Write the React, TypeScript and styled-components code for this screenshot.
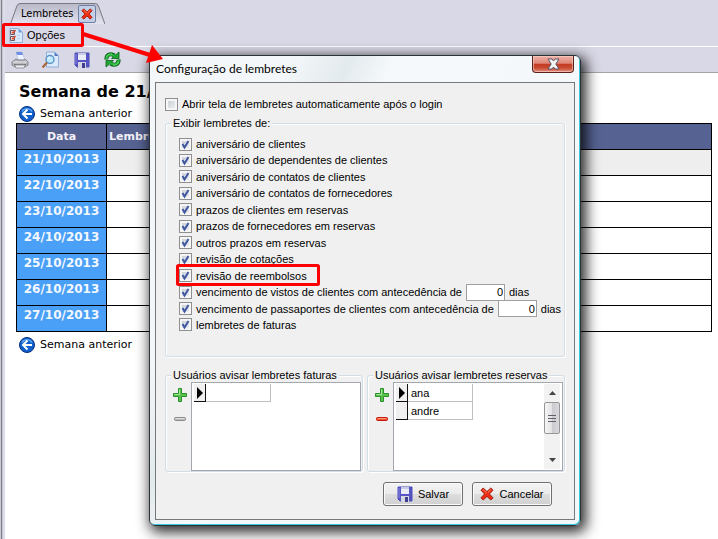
import React from "react";
import styled, { createGlobalStyle } from "styled-components";

const GlobalStyle = createGlobalStyle`
  * { box-sizing: border-box; }
  html, body, #root { margin: 0; height: 100%; }
  body { background: #fff; color: #000; overflow: hidden; font: 11px/16px "Liberation Sans", Arial, sans-serif; }
  button, input { font: inherit; color: inherit; }
`;

const Window = styled.div`
  position: relative;
  display: flex;
  height: 100%;
  overflow: hidden;
`;

const Rail = styled.div`
  flex: 0 0 5px;
  background: linear-gradient(90deg, #c9c8dc 0 1px, #828282 1px 2px, #c6c6cf 2px 3px, #dcdcec 3px 5px);
`;

const Main = styled.main`
  flex: 1;
  min-width: 0;
`;

const Chrome = styled.header`
  background: #d9d8e6;
`;

const TabBar = styled.nav`
  display: flex;
  height: 24px;
  padding: 3px 0 0 5px;
`;

const Tab = styled.div`
  position: relative;
  display: flex;
  align-items: center;
  gap: 5px;
  padding: 0 9px 0 11px;
  font: 11px/16px "DejaVu Sans Condensed", Tahoma, sans-serif;
`;

const TabShape = styled.svg`
  position: absolute;
  inset: 0;
  width: 100%;
  height: 100%;
`;

const TabLabel = styled.span`
  position: relative;
`;

const TabClose = styled.button`
  position: relative;
  display: grid;
  place-items: center;
  width: 18px;
  height: 18px;
  padding: 0;
  border: 1px solid #6d7fa5;
  border-radius: 2px;
  background: #c3cfe6;
`;

const MenuBar = styled.div`
  display: flex;
  height: 23px;
  padding: 0 4px;
  border-bottom: 1px solid #fff;
`;

const MenuItem = styled.button`
  display: flex;
  align-items: center;
  gap: 4px;
  padding: 0;
  border: 0;
  background: none;
`;

const Toolbar = styled.div`
  display: flex;
  align-items: center;
  gap: 12px;
  height: 26px;
  padding: 0 5px;
  border-bottom: 1px solid #a5a5a5;
`;

const ToolButton = styled.button`
  display: grid;
  place-items: center;
  width: 19px;
  height: 20px;
  padding: 0;
  border: 0;
  background: none;
`;

const Report = styled.section`
  padding: 6px 6px 0 11px;
  font-family: "DejaVu Sans", Verdana, sans-serif;
`;

const Heading = styled.h1`
  margin: 0 0 0 3px;
  font-size: 16px;
  line-height: 25px;
`;

const WeekLink = styled.a`
  display: flex;
  align-items: center;
  gap: 5px;
  height: 19px;
  margin: 0 3px;
  color: #000;
  text-decoration: none;
`;

const Table = styled.table`
  width: 100%;
  margin-bottom: 3px;
  border-collapse: collapse;
  font-weight: bold;
`;

const Th = styled.th<{ $left?: boolean }>`
  height: 26px;
  padding: 0 2px;
  border: 1px solid #000;
  background: #566291;
  color: #f2f2f8;
  text-align: ${(p) => (p.$left ? "left" : "center")};
`;

const DateCell = styled.th`
  width: 90px;
  height: 26px;
  padding: 1px 0 0;
  border: 1px solid #000;
  background: #4aa0f7;
  color: #f4f8ff;
  font-size: 12px;
  vertical-align: top;
`;

const EntryCell = styled.td<{ $today?: boolean }>`
  border: 1px solid #000;
  background: ${(p) => (p.$today ? "#eee" : "#fff")};
`;

const Dialog = styled.section`
  position: absolute;
  left: 149px;
  top: 55px;
  width: 432px;
  padding: 0 5px 5px;
  border: 1px solid #2b3337;
  border-radius: 6px;
  background: linear-gradient(115deg, #f3f7f9 0 22%, #e3eaed 31%, #f5f9fb 38%, #f2f7f9);
  box-shadow: inset -1px -1px 0 #3cc8dc, 3px 4px 14px 2px rgba(0, 0, 0, 0.85);
`;

const TitleBar = styled.header`
  display: flex;
  justify-content: space-between;
  height: 26px;
  padding: 0 1px;
`;

const Title = styled.h2`
  margin: 0;
  font: 12px/26px Lato, "Segoe UI", sans-serif;
`;

const CloseButton = styled.button`
  display: grid;
  place-items: center;
  width: 42px;
  height: 17px;
  padding: 0;
  border: 1px solid #5a211c;
  border-top: 0;
  border-radius: 0 0 4px 4px;
  background: linear-gradient(#efb0a5, #dc8577 46%, #c43a22 50%, #c84b33 75%, #e39482);
  box-shadow: inset 0 0 0 1px rgba(255, 215, 205, 0.55);
`;

const Client = styled.div`
  padding: 13px 9px;
  border: 1px solid #75797b;
  background: #f0f0f0;
`;

const Field = styled.label`
  display: flex;
  align-items: center;
  gap: 4px;
  height: 16px;
  white-space: nowrap;
`;

const CheckFrame = styled.span`
  display: grid;
  flex: none;
  place-items: center;
  width: 13px;
  height: 13px;
  > * { grid-area: 1 / 1; }
`;

const CheckInput = styled.input`
  appearance: none;
  width: 13px;
  height: 13px;
  margin: 0;
  border: 1px solid #8e8f8f;
  background: linear-gradient(135deg, #c4c9d2, #f3f4f6);
  box-shadow: inset 0 0 0 2px #f6f6f6;
  + svg { visibility: hidden; pointer-events: none; }
  &:checked + svg { visibility: visible; }
`;

const Group = styled.fieldset`
  min-width: 0;
  margin: 0;
  padding: 0 1px 0 8px;
  border: 1px solid #d3dde5;
  border-radius: 3px;
  box-shadow: 1px 1px 0 #fff, inset 1px 1px 0 #fff;
`;

const Legend = styled.legend`
  margin-left: -3px;
  padding: 0 2px;
  line-height: 14px;
  white-space: nowrap;
  background: #f0f0f0;
`;

const Options = styled.div`
  display: grid;
  align-content: space-between;
  min-height: 197px;
  margin: 6px 5px 23px;
`;

const OptionRow = styled.div`
  display: flex;
  align-items: center;
  gap: 4px;
  height: 16px;
`;

const DaysInput = styled.input`
  width: 39px;
  height: 17px;
  padding: 0 1px;
  border: 1px solid #a0a0a0;
  border-radius: 0;
  background: #fff;
  text-align: right;
`;

const DialogBody = styled.div`
  display: grid;
  gap: 4px;
`;

const UserGroups = styled.div`
  display: grid;
  grid-template-columns: 1fr 1fr;
  gap: 4px;
  margin-top: 7px;
`;

const UserPanel = styled.div`
  display: flex;
  gap: 4px;
`;

const ListActions = styled.div`
  display: flex;
  flex-direction: column;
  gap: 8px;
  padding-top: 5px;
`;

const ListAction = styled.button`
  display: grid;
  place-items: center;
  width: 14px;
  height: 16px;
  margin-left: -1px;
  padding: 0;
  border: 0;
  background: none;
`;

const ListBox = styled.div`
  display: flex;
  flex: 1;
  justify-content: space-between;
  height: 89px;
  padding: 1px 2px;
  border: 1px solid #a3a7ae;
  background: #fff;
`;

const UserTable = styled.table`
  align-self: flex-start;
  border-spacing: 0;
`;

const Marker = styled.td`
  width: 12px;
  height: 18px;
  padding: 0;
  border: solid #111;
  border-width: 0 1px 1px 0;
  background: #f0f0f0;
  line-height: 0;
`;

const UserCell = styled.td`
  width: 65px;
  padding: 0 3px;
  border: solid #c0c0c0;
  border-width: 0 1px 1px 0;
`;

const ScrollTrack = styled.div`
  display: flex;
  flex-direction: column;
  width: 16px;
  background: #f2f2f2;
`;

const ScrollArrow = styled.button`
  display: grid;
  flex: 0 0 18px;
  place-items: center;
  padding: 0;
  border: 0;
  background: none;
`;

const ScrollThumb = styled.div`
  display: grid;
  flex: 0 0 32px;
  place-items: center;
  margin-bottom: auto;
  border: 1px solid #979797;
  border-radius: 2px;
  background: linear-gradient(90deg, #f5f5f5, #e3e3e5 48%, #cbcbd0 52%, #d8d8dc);
`;

const Footer = styled.footer`
  display: flex;
  justify-content: flex-end;
  gap: 9px;
  margin-top: 6px;
  padding-right: 13px;
`;

const PushButton = styled.button`
  display: flex;
  align-items: center;
  justify-content: center;
  gap: 5px;
  min-width: 80px;
  height: 24px;
  padding: 0 6px;
  border: 1px solid #707070;
  border-radius: 3px;
  background: linear-gradient(#f3f3f3, #ebebeb 49%, #dddddd 51%, #d0d0d0);
  box-shadow: inset 0 0 0 1px #fafafa;
`;

const Annotations = styled.svg`
  position: absolute;
  left: 0;
  top: 0;
  pointer-events: none;
`;

const CrossIcon = ({ size = 14 }: { size?: number }) => (
  <svg width={size} height={size} viewBox="0 0 14 14" aria-hidden="true">
    <path d="M3.2 1 7 4.6 10.8 1 13 3.2 9.4 7 13 10.8 10.8 13 7 9.4 3.2 13 1 10.8 4.6 7 1 3.2Z" fill="#ee2c14" stroke="#a51c0c" />
    <path d="M3 2.5 6.8 6M11 2.5 8 5.4" stroke="#ff8a68" />
  </svg>
);

const FloppyIcon = () => (
  <svg width="16" height="16" viewBox="0 0 16 16" aria-hidden="true">
    <path d="M1 1h14v14H3l-2-2Z" fill="#5654c4" stroke="#4f4cb4" />
    <path d="M2 2v10" stroke="#8a88e6" />
    <path d="M4 1h8v7H4Z" fill="#e9ebf6" />
    <path d="M4 1h8v2H4Z" fill="#c8cbe4" />
    <path d="M4 10h8v6H4Z" fill="#d4d6e0" />
    <path d="M8 11h3v5H8Z" fill="#413e92" />
  </svg>
);

const PrinterIcon = () => (
  <svg width="18" height="18" viewBox="0 0 18 18" aria-hidden="true">
    <path d="M5 1h6l3 8H7Z" fill="#eef3ff" stroke="#c3cbe2" />
    <path d="M5 1h6l1 3H6Z" fill="#6f8fe0" />
    <path d="m1 11 4-3 2 1h6l1-1 3 3v3l-3 2H4l-3-2Z" fill="#b9b9be" stroke="#85858c" />
    <path d="M2 11h14" stroke="#e6e6ea" />
    <path d="M3 13.5h12" stroke="#6a6a72" />
    <path d="m4 14 1 3h8l1-3Z" fill="#ececf0" stroke="#9a9aa2" />
  </svg>
);

const PreviewIcon = () => (
  <svg width="19" height="18" viewBox="0 0 19 18" aria-hidden="true">
    <path d="M5.5 1h8l4 4v11h-12Z" fill="#dceafb" stroke="#8fb0da" />
    <path d="M13.500 1v4h4Z" fill="#4f7cc0" />
    <circle cx="9" cy="8.500" r="4" fill="#bfeaff" stroke="#5a92c4" strokeWidth="1.400" />
    <path d="M7 8a2 2 0 0 1 2-2" stroke="#fff" fill="none" />
    <path d="m6 11.500-4.500 5" stroke="#a8683e" strokeWidth="2.200" />
  </svg>
);

const RefreshArrow = () => (
  <>
    <path d="M2.500 8.500C2 4 6 1.500 10.500 4.500" fill="none" stroke="#07631a" strokeWidth="4" />
    <path d="M7.500 7.500h7.500V1Z" fill="#1fa831" stroke="#07631a" strokeWidth=".8" />
    <path d="M2.500 8C2.300 4.300 6 2 11 5" fill="none" stroke="#27b53a" strokeWidth="2.400" />
    <path d="M2.500 6C3.200 3.500 5.500 2.600 8 3" fill="none" stroke="#7be584" strokeWidth=".8" />
  </>
);

const RefreshIcon = () => (
  <svg width="17" height="17" viewBox="0 0 17 17" aria-hidden="true">
    <RefreshArrow />
    <g transform="rotate(180 8.500 8.500)"><RefreshArrow /></g>
  </svg>
);

const OptionsIcon = () => (
  <svg width="14" height="15" viewBox="0 0 14 15" aria-hidden="true">
    <path d="M1 .5h8.500l4 4v10H1Z" fill="#d8eafb" stroke="#8fb1dc" />
    <path d="M9.500 .5v4h4Z" fill="#6f9fdc" />
    <path d="M1.500 2.500h4v4h-4ZM1.500 8.500h4v4h-4Z" fill="#e9dcd8" stroke="#6e5a5c" />
    <path d="m3 4 1 1L6.500 2M3 10l1 1L6.500 8" fill="none" stroke="#e0482c" strokeWidth="1.400" />
    <path d="M8 7.500h3M8 10.500h3" stroke="#b6d2f0" />
  </svg>
);

const BackIcon = () => (
  <svg width="16" height="16" viewBox="0 0 16 16" aria-hidden="true">
    <circle cx="8" cy="8" r="7.500" fill="#0f5fcc" stroke="#06307f" />
    <path d="M3 5.500a6 6 0 0 1 10 0" stroke="#5aa5f0" strokeWidth="1.500" fill="none" />
    <path d="M8.500 3.500 4 8l4.500 4.500M4.500 8H13" fill="none" stroke="#fff" strokeWidth="2" />
  </svg>
);

const PlusIcon = () => (
  <svg width="14" height="14" viewBox="0 0 14 14" aria-hidden="true">
    <path d="M5.500 .5h3v5h5v3h-5v5h-3v-5h-5v-3h5Z" fill="#58c44d" stroke="#2b8f2b" />
    <path d="M6.500 1.500v5h-5" fill="none" stroke="#a5e89a" />
  </svg>
);

const MinusIcon = ({ active }: { active: boolean }) => (
  <svg width="12" height="4" viewBox="0 0 12 4" aria-hidden="true">
    <rect x=".5" y=".5" width="11" height="3" rx="1" fill={active ? "#f4512c" : "#bcbcbc"} stroke={active ? "#c01a0c" : "#8c8c8c"} />
    <path d="M2 1.500h8" stroke={active ? "#ff9b7c" : "#dedede"} />
  </svg>
);

const CheckBox = (props: { id: string; checked: boolean }) => (
  <CheckFrame>
    <CheckInput type="checkbox" id={props.id} defaultChecked={props.checked} />
    <svg width="13" height="13" viewBox="0 0 13 13" aria-hidden="true">
      <path d="m3.500 6 2 3.500L9.500 3" fill="none" stroke="#3f58a0" strokeWidth="2" />
    </svg>
  </CheckFrame>
);

const days = ["21", "22", "23", "24", "25", "26", "27"].map((d) => `${d}/10/2013`);

const options: { text: string; days?: boolean }[] = [
  { text: "aniversário de clientes" },
  { text: "aniversário de dependentes de clientes" },
  { text: "aniversário de contatos de clientes" },
  { text: "aniversário de contatos de fornecedores" },
  { text: "prazos de clientes em reservas" },
  { text: "prazos de fornecedores em reservas" },
  { text: "outros prazos em reservas" },
  { text: "revisão de cotações" },
  { text: "revisão de reembolsos" },
  { text: "vencimento de vistos de clientes com antecedência de", days: true },
  { text: "vencimento de passaportes de clientes com antecedência de", days: true },
  { text: "lembretes de faturas" },
];

const PreviousWeek = () => (
  <WeekLink href="#semana-anterior">
    <BackIcon />
    Semana anterior
  </WeekLink>
);

function Users({ title, users, scroll }: { title: string; users: string[]; scroll?: boolean }) {
  return (
    <Group>
      <Legend>{title}</Legend>
      <UserPanel>
        <ListActions>
          <ListAction aria-label="Adicionar usuário"><PlusIcon /></ListAction>
          <ListAction aria-label="Remover usuário"><MinusIcon active={!!scroll} /></ListAction>
        </ListActions>
        <ListBox>
          <UserTable>
            <tbody>
              {users.map((user, i) => (
                <tr key={user}>
                  <Marker>
                    {i === 0 && (
                      <svg width="10" height="12" viewBox="0 0 10 12" aria-hidden="true">
                        <path d="m3 0 6 6-6 6Z" />
                      </svg>
                    )}
                  </Marker>
                  <UserCell>{user}</UserCell>
                </tr>
              ))}
            </tbody>
          </UserTable>
          {scroll && (
            <ScrollTrack>
              <ScrollArrow aria-label="Rolar para cima">
                <svg width="7" height="4" viewBox="0 0 7 4"><path d="M0 4 3.500 0 7 4Z" fill="#444" /></svg>
              </ScrollArrow>
              <ScrollThumb>
                <svg width="8" height="9" viewBox="0 0 8 9"><path d="M0 1.500h8M0 4.500h8M0 7.500h8" stroke="#606068" /></svg>
              </ScrollThumb>
              <ScrollArrow aria-label="Rolar para baixo">
                <svg width="7" height="4" viewBox="0 0 7 4"><path d="M0 0h7L3.500 4Z" fill="#444" /></svg>
              </ScrollArrow>
            </ScrollTrack>
          )}
        </ListBox>
      </UserPanel>
    </Group>
  );
}

export default function App() {
  return (
    <Window>
      <GlobalStyle />
      <Rail />
      <Main>
        <Chrome>
          <TabBar>
            <Tab>
              <TabShape viewBox="0 0 97 21" preserveAspectRatio="none" aria-hidden="true">
                <defs>
                  <linearGradient id="tab" x2="0" y2="1">
                    <stop stopColor="#b9b8c8" />
                    <stop offset="1" stopColor="#e4e3ef" />
                  </linearGradient>
                </defs>
                <path d="M.5 21 7 3Q8 .5 10 .5H87Q89 .5 90 3L96.500 21" fill="url(#tab)" stroke="#77777d" />
              </TabShape>
              <TabLabel>Lembretes</TabLabel>
              <TabClose aria-label="Fechar aba"><CrossIcon size={12} /></TabClose>
            </Tab>
          </TabBar>
          <MenuBar>
            <MenuItem><OptionsIcon />Opções</MenuItem>
          </MenuBar>
          <Toolbar>
            <ToolButton aria-label="Imprimir"><PrinterIcon /></ToolButton>
            <ToolButton aria-label="Visualizar"><PreviewIcon /></ToolButton>
            <ToolButton aria-label="Salvar relatório"><FloppyIcon /></ToolButton>
            <ToolButton aria-label="Atualizar"><RefreshIcon /></ToolButton>
          </Toolbar>
        </Chrome>
        <Report>
          <Heading>Semana de 21/10</Heading>
          <PreviousWeek />
          <Table>
            <thead>
              <tr>
                <Th>Data</Th>
                <Th $left>Lembretes</Th>
              </tr>
            </thead>
            <tbody>
              {days.map((day, i) => (
                <tr key={day}>
                  <DateCell scope="row">{day}</DateCell>
                  <EntryCell $today={i === 0} />
                </tr>
              ))}
            </tbody>
          </Table>
          <PreviousWeek />
        </Report>
      </Main>

      <Dialog role="dialog" aria-labelledby="dialog-title">
        <TitleBar>
          <Title id="dialog-title">Configuração de lembretes</Title>
          <CloseButton aria-label="Fechar">
            <svg width="13" height="12" viewBox="0 0 13 12" aria-hidden="true">
              <path d="M1 1h4l1.500 2L8 1h4L8.800 6 12 11H8L6.500 9 5 11H1l3.200-5Z" fill="#f4f4f6" stroke="#5a5468" />
            </svg>
          </CloseButton>
        </TitleBar>
        <Client>
          <DialogBody>
            <Field htmlFor="auto">
              <CheckBox id="auto" checked={false} />
              Abrir tela de lembretes automaticamente após o login
            </Field>
            <Group>
              <Legend>Exibir lembretes de:</Legend>
              <Options>
                {options.map((option, i) => (
                  <OptionRow key={option.text}>
                    <Field htmlFor={`option-${i}`}>
                      <CheckBox id={`option-${i}`} checked />
                      {option.text}
                    </Field>
                    {option.days && (
                      <>
                        <DaysInput id={`days-${i}`} defaultValue="0" />
                        <label htmlFor={`days-${i}`}>dias</label>
                      </>
                    )}
                  </OptionRow>
                ))}
              </Options>
            </Group>
            <UserGroups>
              <Users title="Usuários avisar lembretes faturas" users={[""]} />
              <Users title="Usuários avisar lembretes reservas" users={["ana", "andre"]} scroll />
            </UserGroups>
            <Footer>
              <PushButton><FloppyIcon />Salvar</PushButton>
              <PushButton><CrossIcon />Cancelar</PushButton>
            </Footer>
          </DialogBody>
        </Client>
      </Dialog>

      <Annotations width="330" height="300" aria-hidden="true">
        <g fill="none" stroke="#f00" strokeWidth="3">
          <rect x="3.500" y="24.500" width="79" height="21" rx="1" />
          <rect x="177.500" y="265.500" width="141" height="19" rx="1" />
          <path d="M83 34 150 55" strokeWidth="4" />
        </g>
        <path d="M152 45 163 59 146 63Z" fill="#f00" />
      </Annotations>
    </Window>
  );
}
